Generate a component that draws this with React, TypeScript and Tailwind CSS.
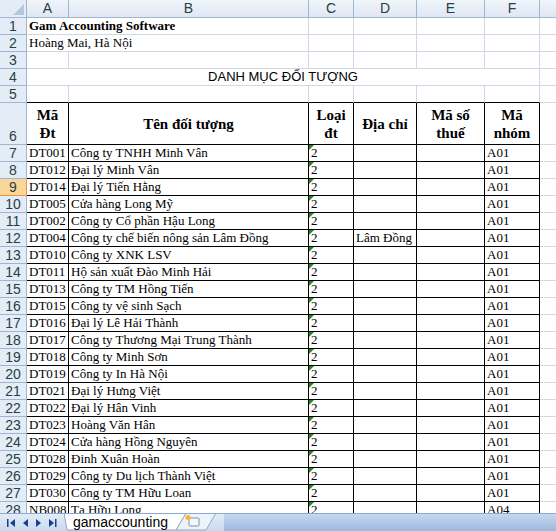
import React from 'react';

const colW = ['w-[42px]', 'w-[240px]', 'w-[45px]', 'w-[63px]', 'w-[68px]', 'w-[55px]'];
const letters = ['A', 'B', 'C', 'D', 'E', 'F'];

const rows: [string, string, string, string][] = [
  ['DT001', 'Công ty TNHH Minh Vân', '', 'A01'],
  ['DT012', 'Đại lý Minh Vân', '', 'A01'],
  ['DT014', 'Đại lý Tiến Hằng', '', 'A01'],
  ['DT005', 'Cửa hàng Long Mỹ', '', 'A01'],
  ['DT002', 'Công ty Cổ phần Hậu Long', '', 'A01'],
  ['DT004', 'Công ty chế biến nông sản Lâm Đồng', 'Lâm Đồng', 'A01'],
  ['DT010', 'Công ty XNK LSV', '', 'A01'],
  ['DT011', 'Hộ sản xuất Đào Minh Hải', '', 'A01'],
  ['DT013', 'Công ty TM Hồng Tiến', '', 'A01'],
  ['DT015', 'Công ty vệ sinh Sạch', '', 'A01'],
  ['DT016', 'Đại lý Lê Hải Thành', '', 'A01'],
  ['DT017', 'Công ty Thương Mại Trung Thành', '', 'A01'],
  ['DT018', 'Công ty Minh Sơn', '', 'A01'],
  ['DT019', 'Công ty In Hà Nội', '', 'A01'],
  ['DT021', 'Đại lý Hưng Việt', '', 'A01'],
  ['DT022', 'Đại lý Hân Vinh', '', 'A01'],
  ['DT023', 'Hoàng Văn Hân', '', 'A01'],
  ['DT024', 'Cửa hàng Hồng Nguyên', '', 'A01'],
  ['DT028', 'Đinh Xuân Hoàn', '', 'A01'],
  ['DT029', 'Công ty Du lịch Thành Việt', '', 'A01'],
  ['DT030', 'Công ty TM Hữu Loan', '', 'A01'],
  ['NB008', 'Tạ Hữu Long', '', 'A04'],
];

const hdrFont = "font-['Liberation_Sans',Arial,sans-serif]";

function RowHead({ n, tall, active }: { n: number; tall?: boolean; active?: boolean }) {
  return (
    <div
      className={`w-[27px] shrink-0 flex justify-center border-r border-b ${hdrFont} text-[14px] leading-[16px] text-[#27413e] ${
        tall ? 'items-end' : 'items-center'
      } ${active ? 'bg-[#fbd69a] border-[#f29536]' : 'bg-[#e4ecf7] border-[#9eb6ce]'}`}
    >
      {n}
    </div>
  );
}

function Blank({ w, black }: { w: string; black?: boolean }) {
  return <div className={`${w} shrink-0 border-r border-b ${black ? 'border-b-black border-r-[#d0d7e5]' : 'border-[#d0d7e5]'}`} />;
}

function Tail() {
  return <div className="flex-1 border-b border-[#d0d7e5]" />;
}

export default function App() {
  return (
    <div className="w-[556px] h-[531px] overflow-hidden bg-white flex flex-col font-['Liberation_Serif','Times_New_Roman',serif] text-[13px] text-black">
      <div className="flex-1 overflow-hidden">
        {/* column headers */}
        <div className="flex h-[18px]">
          <div className="w-[27px] shrink-0 border-r border-b border-[#9eb6ce] bg-[#e4ecf7] relative">
            <div className="absolute right-[2px] bottom-[2px] w-0 h-0 [border-bottom:11px_solid_#b6c7dd] [border-left:11px_solid_transparent]" />
          </div>
          {letters.map((l, i) => (
            <div
              key={l}
              className={`${colW[i]} shrink-0 border-r border-b border-[#9eb6ce] bg-gradient-to-b from-[#f1f5fb] to-[#dfe7f2] flex items-center justify-center ${hdrFont} text-[14px] text-[#27413e]`}
            >
              {l}
            </div>
          ))}
          <div className="flex-1 border-b border-[#9eb6ce] bg-gradient-to-b from-[#f1f5fb] to-[#dfe7f2]" />
        </div>

        {/* row 1 */}
        <div className="flex h-[17px]">
          <RowHead n={1} />
          <div className="w-[282px] shrink-0 border-r border-b border-[#d0d7e5] pl-[2px] font-bold leading-[16px] whitespace-nowrap">
            Gam Accounting Software
          </div>
          {colW.slice(2).map((w, i) => (
            <Blank key={i} w={w} />
          ))}
          <Tail />
        </div>

        {/* row 2 */}
        <div className="flex h-[17px]">
          <RowHead n={2} />
          <div className="w-[282px] shrink-0 border-r border-b border-[#d0d7e5] pl-[2px] leading-[16px] whitespace-nowrap">
            Hoàng Mai, Hà Nội
          </div>
          {colW.slice(2).map((w, i) => (
            <Blank key={i} w={w} />
          ))}
          <Tail />
        </div>

        {/* row 3 */}
        <div className="flex h-[17px]">
          <RowHead n={3} />
          {colW.map((w, i) => (
            <Blank key={i} w={w} />
          ))}
          <Tail />
        </div>

        {/* row 4 - merged title */}
        <div className="flex h-[17px]">
          <RowHead n={4} />
          <div className="w-[513px] shrink-0 border-r border-b border-[#d0d7e5] flex items-center justify-center font-['Liberation_Sans',Arial,sans-serif] text-[13px] leading-[16px]">
            DANH MỤC ĐỐI TƯỢNG
          </div>
          <Tail />
        </div>

        {/* row 5 */}
        <div className="flex h-[17px]">
          <RowHead n={5} />
          {colW.map((w, i) => (
            <Blank key={i} w={w} black />
          ))}
          <Tail />
        </div>

        {/* row 6 - table header */}
        <div className="flex h-[42px]">
          <RowHead n={6} tall />
          {['Mã Đt', 'Tên đối tượng', 'Loại đt', 'Địa chỉ', 'Mã số thuế', 'Mã nhóm'].map((t, i) => (
            <div
              key={t}
              className={`${colW[i]} shrink-0 border-r border-b border-black flex items-center justify-center text-center font-bold text-[15px] leading-[18px] px-[3px]`}
            >
              {t}
            </div>
          ))}
          <Tail />
        </div>

        {/* data rows */}
        {rows.map((r, idx) => (
          <div key={r[0]} className="flex h-[17px]">
            <RowHead n={idx + 7} active={idx + 7 === 9} />
            <div className={`${colW[0]} shrink-0 border-r border-b border-black pl-[2px] leading-[16px] whitespace-nowrap`}>{r[0]}</div>
            <div className={`${colW[1]} shrink-0 border-r border-b border-black pl-[2px] leading-[16px] whitespace-nowrap overflow-hidden`}>{r[1]}</div>
            <div className={`${colW[2]} shrink-0 border-r border-b border-black pl-[2px] leading-[16px] relative`}>
              <span className="absolute left-0 top-0 w-0 h-0 border-t-[5px] border-r-[5px] border-t-[#1e8a1e] border-r-transparent" />
              2
            </div>
            <div className={`${colW[3]} shrink-0 border-r border-b border-black pl-[2px] leading-[16px] whitespace-nowrap`}>{r[2]}</div>
            <div className={`${colW[4]} shrink-0 border-r border-b border-black`} />
            <div className={`${colW[5]} shrink-0 border-r border-b border-black pl-[2px] leading-[16px]`}>{r[3]}</div>
            <Tail />
          </div>
        ))}
      </div>

      {/* sheet tab bar */}
      <div className="h-[18px] shrink-0 flex border-t border-[#8ba8d1] bg-gradient-to-b from-[#c7d8ee] to-[#9cb8df]">
        <div className="w-[64px] shrink-0 flex items-center justify-around px-[4px] bg-gradient-to-b from-[#e3ecf8] to-[#c9d9ef]">
          <svg width="9" height="8" viewBox="0 0 9 8">
            <rect x="0" y="0" width="1.5" height="8" fill="#15428b" />
            <path d="M8 0 L3 4 L8 8 Z" fill="#15428b" />
          </svg>
          <svg width="6" height="8" viewBox="0 0 6 8">
            <path d="M5 0 L0 4 L5 8 Z" fill="#15428b" />
          </svg>
          <svg width="6" height="8" viewBox="0 0 6 8">
            <path d="M1 0 L6 4 L1 8 Z" fill="#15428b" />
          </svg>
          <svg width="9" height="8" viewBox="0 0 9 8">
            <path d="M1 0 L6 4 L1 8 Z" fill="#15428b" />
            <rect x="7" y="0" width="1.5" height="8" fill="#15428b" />
          </svg>
        </div>
        <div className="w-[160px] shrink-0 relative bg-gradient-to-b from-[#e3ecf8] to-[#c9d9ef]">
          <svg className="absolute left-0 top-0" width="160" height="17" viewBox="0 0 160 17">
            <path d="M152 -1 L142 16 L112 16 L122 -1 Z" fill="#eef3fa" stroke="#8ba8d1" />
            <path d="M0 -1 L3 16 L112 16 L122 -1 Z" fill="#ffffff" stroke="#8ba8d1" />
            <rect x="125" y="4" width="10" height="8" rx="1" fill="#f4f7fb" stroke="#7f93ad" />
            <circle cx="124" cy="3.5" r="2.5" fill="#f7b72a" />
          </svg>
          <span className="absolute left-[9px] top-0 font-['Liberation_Sans',Arial,sans-serif] text-[14px] leading-[16px] text-black">
            gamaccounting
          </span>
        </div>
        <div className="flex-1" />
      </div>
    </div>
  );
}
